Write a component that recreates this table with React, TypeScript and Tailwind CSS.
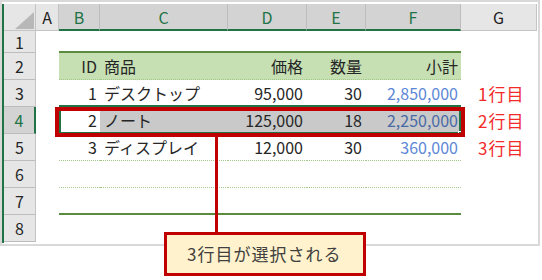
import React from "react";

type Cell = { text?: string; className?: string };

const COLS = ["A", "B", "C", "D", "E", "F", "G"];
const ACTIVE_COLS = ["B", "C", "D", "E", "F"];

const label = "pl-[17px] text-[#f22a2a] text-[17px] tracking-[1px]";

const rows: { n: number; cells: Cell[]; h: string }[] = [
  { n: 1, h: "h-[22px]", cells: [] },
  {
    n: 2,
    h: "h-[27px]",
    cells: [
      {},
      { text: "ID", className: "justify-end pr-[3px] bg-[#c6e0b4]" },
      { text: "商品", className: "pl-[4px] bg-[#c6e0b4]" },
      { text: "価格", className: "justify-end pr-[4px] bg-[#c6e0b4]" },
      { text: "数量", className: "justify-end pr-[4px] bg-[#c6e0b4]" },
      { text: "小計", className: "justify-end pr-[3px] bg-[#c6e0b4]" },
      {},
    ],
  },
  {
    n: 3,
    h: "h-[27px]",
    cells: [
      {},
      { text: "1", className: "justify-end pr-[3px]" },
      { text: "デスクトップ", className: "pl-[4px]" },
      { text: "95,000", className: "justify-end pr-[4px]" },
      { text: "30", className: "justify-end pr-[4px]" },
      { text: "2,850,000", className: "justify-end pr-[3px] text-[#5b87d6]" },
      { text: "1行目", className: label },
    ],
  },
  {
    n: 4,
    h: "h-[27px]",
    cells: [
      {},
      { text: "2", className: "justify-end pr-[3px] bg-white" },
      { text: "ノート", className: "pl-[4px] bg-[#c9c9c9]" },
      { text: "125,000", className: "justify-end pr-[4px] bg-[#c9c9c9]" },
      { text: "18", className: "justify-end pr-[4px] bg-[#c9c9c9]" },
      { text: "2,250,000", className: "justify-end pr-[3px] bg-[#c9c9c9] text-[#4a6aa6]" },
      { text: "2行目", className: label },
    ],
  },
  {
    n: 5,
    h: "h-[27px]",
    cells: [
      {},
      { text: "3", className: "justify-end pr-[3px]" },
      { text: "ディスプレイ", className: "pl-[4px]" },
      { text: "12,000", className: "justify-end pr-[4px]" },
      { text: "30", className: "justify-end pr-[4px]" },
      { text: "360,000", className: "justify-end pr-[3px] text-[#5b87d6]" },
      { text: "3行目", className: label },
    ],
  },
  { n: 6, h: "h-[27px]", cells: [] },
  { n: 7, h: "h-[27px]", cells: [] },
  { n: 8, h: "h-[27px]", cells: [] },
];

// bottom rule under each row of the table (B..F only)
const tableRule: Record<number, string> = {
  1: "border-b-2 border-[#5b8c3e]",
  2: "border-b border-dotted border-[#a3c98a]",
  3: "border-b border-dotted border-[#a3c98a]",
  4: "border-b border-dotted border-[#a3c98a]",
  5: "border-b border-dotted border-[#a3c98a]",
  6: "border-b border-dotted border-[#a3c98a]",
  7: "border-b-2 border-[#5b8c3e]",
};

const widths = [
  "w-[23px]",
  "w-[41px]",
  "w-[128px]",
  "w-[79px]",
  "w-[59px]",
  "w-[95px]",
  "w-[76px]",
];

function ColumnHeader() {
  return (
    <div className="flex h-[27px]">
      <div className="relative w-[32px] bg-[#e6e6e6] border-r border-b border-[#c4c4c4]">
        <svg className="absolute left-[11px] top-[8px]" width="19" height="17" viewBox="0 0 19 17">
          <polygon points="19,0 19,17 0,17" fill="#b8b8b8" />
        </svg>
      </div>
      {COLS.map((c, i) => {
        const active = ACTIVE_COLS.includes(c);
        return (
          <div
            key={c}
            className={`${widths[i]} flex items-center justify-center border-r ${
              active
                ? "bg-[#d3d3d3] text-[#217346] border-[#bdbdbd] border-b-2 border-b-[#217346]"
                : "bg-[#e6e6e6] text-[#222] border-[#c4c4c4] border-b border-b-[#c4c4c4]"
            }`}
          >
            {c}
          </div>
        );
      })}
    </div>
  );
}

export default function App() {
  return (
    <div
      className="relative w-[542px] h-[280px] bg-white text-[16px] text-[#262626] overflow-hidden"
      style={{ fontFamily: '"Noto Sans CJK JP", "Noto Sans", sans-serif' }}
    >
      <div className="w-[540px] h-[246px] border-2 border-[#d9d9d9] pt-[2px] flex">
        <div className="w-[2px] h-[239px] bg-[#217346]" />
        <div className="flex flex-col">
          <ColumnHeader />
          {rows.map((r) => (
            <div key={r.n} className={`flex ${r.h}`}>
              <div
                className={`w-[32px] flex items-center justify-center border-b border-[#bdbdbd] ${
                  r.n === 4
                    ? "bg-[#d3d3d3] text-[#217346] border-r-2 border-r-[#217346]"
                    : "bg-[#e6e6e6] border-r border-r-[#c4c4c4]"
                }`}
              >
                {r.n}
              </div>
              {COLS.map((c, i) => {
                const cell = r.cells[i] ?? {};
                const inTable = ACTIVE_COLS.includes(c);
                return (
                  <div
                    key={c}
                    className={`${widths[i]} flex items-center whitespace-nowrap ${
                      inTable ? tableRule[r.n] ?? "" : ""
                    } ${cell.className ?? ""}`}
                  >
                    {cell.text}
                  </div>
                );
              })}
            </div>
          ))}
        </div>
      </div>

      {/* selection outline + fill handle */}
      <div className="absolute left-[59px] top-[105px] w-[402px] h-[29px] border-2 border-[#217346]" />
      <div className="absolute left-[458px] top-[131px] w-[5px] h-[5px] bg-[#217346] border border-white" />

      {/* highlighted row frame */}
      <div className="absolute left-[55px] top-[107px] w-[410px] h-[30px] border-4 border-[#c00000]" />

      {/* callout */}
      <div className="absolute left-[215px] top-[137px] w-[3px] h-[95px] bg-[#c00000]" />
      <div className="absolute left-[164px] top-[232px] w-[202px] h-[44px] border-[3px] border-[#c00000] bg-[#fff2cc] flex items-center pl-[20px] text-[17px] tracking-[1px] text-[#404040]">
        3行目が選択される
      </div>
    </div>
  );
}
